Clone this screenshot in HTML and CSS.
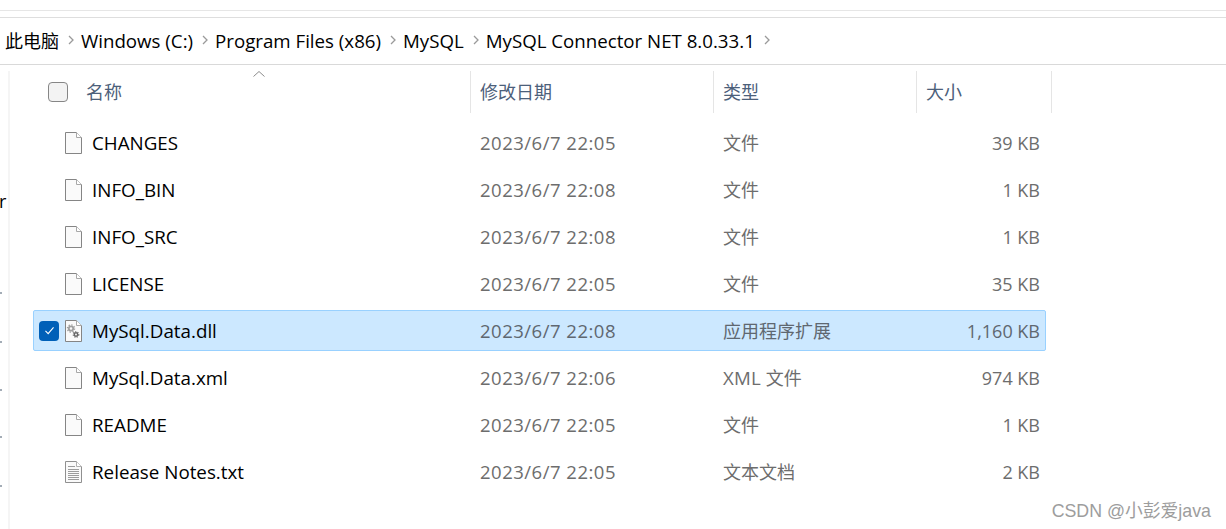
FILE: index.html
```html
<!DOCTYPE html>
<html lang="zh-CN">
<head>
<meta charset="utf-8">
<title>MySQL Connector NET 8.0.33.1</title>
<link rel="stylesheet" href="styles.css">
</head>
<body>
<svg class="defs" width="0" height="0" aria-hidden="true">
  <defs>
    <symbol id="blank" viewBox="0 0 17 22">
      <path d="M.5.5H11.5L16.5 5.5V21.500H.5Z" fill="#fafafa" stroke="#858585"/>
      <path d="M11.500.5V5.500H16.500" fill="#fff" stroke="#a8a8a8"/>
    </symbol>
    <symbol id="dll" viewBox="0 0 17 22">
      <path d="M.5.5H11.5L16.5 5.5V21.500H.5Z" fill="#fafafa" stroke="#858585"/>
      <path d="M11.500.5V5.500H16.500" fill="#fff" stroke="#a8a8a8"/>
      <circle cx="6" cy="8.500" r="2.200" fill="none" stroke="#a0a0a0" stroke-width="1.800"/>
      <circle cx="6" cy="8.500" r="3.600" fill="none" stroke="#a0a0a0" stroke-width="1.300" stroke-dasharray="1.400 1.400"/>
      <circle cx="11" cy="14.500" r="1.700" fill="none" stroke="#666" stroke-width="1.500"/>
      <circle cx="11" cy="14.500" r="2.800" fill="none" stroke="#666" stroke-width="1.100" stroke-dasharray="1.200 1.200"/>
    </symbol>
    <symbol id="txt" viewBox="0 0 17 22">
      <path d="M.5.5H11.5L16.5 5.5V21.500H.5Z" fill="#fafafa" stroke="#909090"/>
      <path d="M11.500.5V5.500H16.500" fill="#fff" stroke="#b0b0b0"/>
      <path d="M3 5.500H10M3 8.500H14M3 10.500H14M3 12.500H14M3 14.500H14M3 16.500H14M3 18.500H14" stroke="#9c9c9c" fill="none"/>
    </symbol>
  </defs>
</svg>
<div class="top-gap"></div>
<div class="rule-strip"></div>
<nav class="crumbs">
  <span class="cjk">此电脑</span><svg class="chev" viewBox="0 0 6 10"><path d="M1 1l4 4-4 4"/></svg>
  <span>Windows (C:)</span><svg class="chev" viewBox="0 0 6 10"><path d="M1 1l4 4-4 4"/></svg>
  <span>Program Files (x86)</span><svg class="chev" viewBox="0 0 6 10"><path d="M1 1l4 4-4 4"/></svg>
  <span>MySQL</span><svg class="chev" viewBox="0 0 6 10"><path d="M1 1l4 4-4 4"/></svg>
  <span>MySQL Connector NET 8.0.33.1</span><svg class="chev" viewBox="0 0 6 10"><path d="M1 1l4 4-4 4"/></svg>
</nav>
<main class="body">
  <aside class="side">
    <span class="side-r">r</span>
    <i class="dot d1"></i><i class="dot d2"></i><i class="dot d3"></i><i class="dot d4"></i><i class="dot d5"></i>
  </aside>
  <section class="list">
    <header class="head">
      <div class="hcell hname">
        <span class="hcheck"></span><span>名称</span>
        <svg class="sort" viewBox="0 0 12 6"><path d="M.5 5.500L6 .5l5.500 5"/></svg>
      </div>
      <div class="hcell">修改日期</div>
      <div class="hcell">类型</div>
      <div class="hcell">大小</div>
    </header>
    <div class="row"><div class="name"><svg class="ficon"><use href="#blank"/></svg>CHANGES</div><div class="date">2023/6/7 22:05</div><div class="type">文件</div><div class="size">39 KB</div></div>
    <div class="row"><div class="name"><svg class="ficon"><use href="#blank"/></svg>INFO_BIN</div><div class="date">2023/6/7 22:08</div><div class="type">文件</div><div class="size">1 KB</div></div>
    <div class="row"><div class="name"><svg class="ficon"><use href="#blank"/></svg>INFO_SRC</div><div class="date">2023/6/7 22:08</div><div class="type">文件</div><div class="size">1 KB</div></div>
    <div class="row"><div class="name"><svg class="ficon"><use href="#blank"/></svg>LICENSE</div><div class="date">2023/6/7 22:05</div><div class="type">文件</div><div class="size">35 KB</div></div>
    <div class="row selected"><div class="name"><span class="check"><svg viewBox="0 0 12 10"><path d="M1.500 5.500L4.500 8.500L10.500 1.500"/></svg></span><svg class="ficon"><use href="#dll"/></svg>MySql.Data.dll</div><div class="date">2023/6/7 22:08</div><div class="type">应用程序扩展</div><div class="size">1,160 KB</div></div>
    <div class="row"><div class="name"><svg class="ficon"><use href="#blank"/></svg>MySql.Data.xml</div><div class="date">2023/6/7 22:06</div><div class="type"><span class="latin">XML</span> 文件</div><div class="size">974 KB</div></div>
    <div class="row"><div class="name"><svg class="ficon"><use href="#blank"/></svg>README</div><div class="date">2023/6/7 22:05</div><div class="type">文件</div><div class="size">1 KB</div></div>
    <div class="row"><div class="name"><svg class="ficon"><use href="#txt"/></svg>Release Notes.txt</div><div class="date">2023/6/7 22:05</div><div class="type">文本文档</div><div class="size">2 KB</div></div>
  </section>
</main>
<div class="mark">CSDN @小彭爱java</div>
</body>
</html>
```

FILE: styles.css
```css
* { box-sizing: border-box; }
html, body { margin: 0; height: 529px; overflow: hidden; background: #fff; }
body {
  position: relative;
  font-family: "Open Sans", "Noto Sans CJK SC", sans-serif;
  font-size: 18px;
  color: #000;
}
.defs { position: absolute; }
.top-gap { height: 11px; border-bottom: 1px solid #e6e6e6; }
.rule-strip { height: 7px; border-bottom: 1px solid #dedede; }
.crumbs {
  height: 47px;
  border-bottom: 1px solid #d9d9d9;
  display: flex;
  align-items: center;
  padding: 0 0 2px 5px;
  font-size: 18.700px;
  white-space: nowrap;
}
.crumbs .cjk { font-size: 18px; }
.chev {
  width: 6px; height: 10px;
  margin: 0 7px 0 9px;
  fill: none; stroke: #9a9a9a; stroke-width: 1.300;
}
.body { display: flex; padding-top: 6px; }
.side {
  position: relative;
  width: 10px;
  height: 458px;
  border-right: 2px solid #f5f5f5;
  flex: none;
  overflow: hidden;
}
.side-r { position: absolute; left: -1px; top: 118px; line-height: 24px; font-size: 18px; }
.dot { position: absolute; left: 0; width: 2px; height: 2px; background: #a3acb6; }
.d1 { top: 221px; } .d2 { top: 270px; } .d3 { top: 318px; } .d4 { top: 365px; } .d5 { top: 414px; }
.list { margin-left: 23px; width: 1019px; }
.head { display: grid; grid-template-columns: 438px 243px 203px 135px; height: 42px; color: #4c607a; padding-bottom: 2px; }
.row { display: grid; grid-template-columns: 437px 243px 203px 1fr; width: 1013px; }
.hcell {
  display: flex;
  align-items: center;
  padding: 0 0 2px 9px;
  border-right: 1px solid #e5e5e5;
  margin-bottom: -2px;
}
.hname { position: relative; padding-left: 15px; gap: 18px; }
.hcheck {
  width: 20px; height: 20px;
  margin-top: 2px;
  background: #f3f3f3;
  border: 1px solid #868686;
  border-radius: 4px;
}
.sort {
  position: absolute;
  left: 220px; top: 0;
  width: 12px; height: 6px;
  fill: none; stroke: #8c8c8c;
}
.head + .row { margin-top: 7px; }
.row {
  height: 47px;
  align-items: center;
  color: #6d6d6d;
  border: 1px solid transparent;
  padding-bottom: 2px;
}
.date, .type { padding-left: 9px; }
.type { padding-bottom: 2px; }
.date { font-size: 18.500px; letter-spacing: .5px; }
.latin { font-size: 18.700px; letter-spacing: .2px; }
.name { display: flex; align-items: center; color: #000; padding-left: 31px; position: relative; font-size: 18.800px; }
.ficon { width: 17px; height: 22px; margin-right: 10px; flex: none; }
.size { text-align: right; padding-right: 5px; }
.row.selected {
  height: 41px;
  margin: 2px 0 4px;
  padding-bottom: 0;
  background: #cce8ff;
  border: 1px solid #99d1ff;
  border-radius: 2px;
  color: #5f6770;
}
.selected .name { color: #000; }
.check {
  position: absolute;
  left: 5px; top: 50%;
  margin-top: -10px;
  width: 20px; height: 20px;
  border-radius: 4px;
  background: #0060b8;
  display: flex; align-items: center; justify-content: center;
}
.check svg { width: 11px; height: 9px; fill: none; stroke: #fff; stroke-width: 1.200; }
.mark {
  position: absolute;
  right: 15px; bottom: 6px;
  font-family: "Liberation Sans", "Noto Sans CJK SC", sans-serif;
  font-size: 17.800px;
  line-height: 24px;
  color: #9d9d9d;
}
```
